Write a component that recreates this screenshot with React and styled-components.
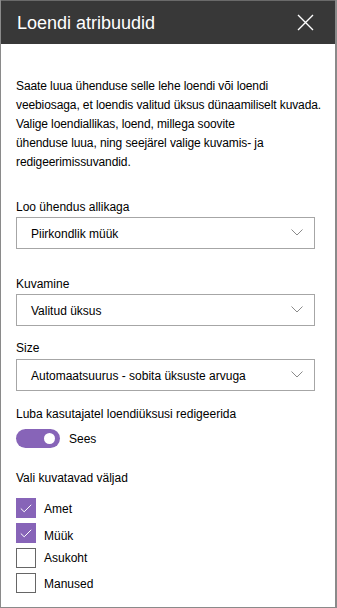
import React, { useState } from 'react';
import styled, { createGlobalStyle } from 'styled-components';

const GlobalStyle = createGlobalStyle`
  html, body {
    margin: 0;
    padding: 0;
    background: #fff;
  }
  body {
    font-family: "Liberation Sans", Arial, sans-serif;
    color: #000;
  }
`;

const Panel = styled.div`
  width: 337px;
  height: 608px;
  box-sizing: border-box;
  border: 1px solid #8a8a8a;
  border-right-width: 2px;
  border-top: none;
  display: flex;
  flex-direction: column;
  background: #fff;
`;

const Header = styled.div`
  height: 44px;
  flex-shrink: 0;
  background: #383838;
  border-top: 1px solid #6a6a6a;
  box-sizing: border-box;
  display: flex;
  align-items: center;
  justify-content: space-between;
  padding: 0 21px 0 16px;
`;

const Title = styled.h1`
  margin: 0;
  font-size: 18px;
  font-weight: 400;
  color: #fff;
  padding-top: 2px;
`;

const CloseButton = styled.button`
  background: none;
  border: none;
  padding: 0;
  width: 17px;
  height: 17px;
  cursor: pointer;
  display: flex;
`;

const Body = styled.div`
  padding: 0 20px 0 15px;
  display: flex;
  flex-direction: column;
`;

const Description = styled.p`
  margin: 33px 0 0;
  font-size: 12px;
  line-height: 19px;
  white-space: nowrap;
  letter-spacing: -0.1px;
`;

const Section = styled.div`
  margin-top: ${p => p.$top}px;
  display: flex;
  flex-direction: column;
`;

const Label = styled.div`
  font-size: 12px;
  line-height: 16px;
  margin-bottom: ${p => p.$gap ?? 2}px;
`;

const Dropdown = styled.div`
  height: 32px;
  box-sizing: border-box;
  border: 1px solid #a6a6a6;
  display: flex;
  align-items: center;
  justify-content: space-between;
  padding: 2px 11px 0 14px;
  font-size: 12px;
  cursor: pointer;
`;

const ToggleRow = styled.div`
  display: flex;
  align-items: center;
  gap: 9px;
  font-size: 12px;
`;

const Track = styled.button`
  width: 44px;
  height: 19px;
  border-radius: 10px;
  border: none;
  padding: 0 5px;
  background: ${p => (p.$on ? '#8764b8' : '#a6a6a6')};
  display: flex;
  align-items: center;
  justify-content: ${p => (p.$on ? 'flex-end' : 'flex-start')};
  cursor: pointer;
`;

const Knob = styled.span`
  width: 11px;
  height: 11px;
  border-radius: 50%;
  background: #fff;
`;

const CheckList = styled.div`
  display: flex;
  flex-direction: column;
  gap: 5px;
`;

const CheckRow = styled.label`
  display: flex;
  align-items: center;
  gap: 8px;
  font-size: 12px;
  cursor: pointer;
`;

const Box = styled.span`
  width: 20px;
  height: 20px;
  box-sizing: border-box;
  border: 1px solid ${p => (p.$checked ? '#8764b8' : '#666')};
  background: ${p => (p.$checked ? '#8764b8' : '#fff')};
  display: flex;
  align-items: center;
  justify-content: center;
`;

const CheckText = styled.span`
  padding-top: ${p => p.$drop}px;
`;

const Chevron = () => (
  <svg width="12" height="7" viewBox="0 0 12 7" style={{ marginTop: -3 }}>
    <path d="M0.5 0.5 L6 6 L11.5 0.5" fill="none" stroke="#8a8a8a" strokeWidth="1" />
  </svg>
);

const fields = [
  { name: 'Amet', checked: true, drop: 2 },
  { name: 'Müük', checked: true, drop: 6 },
  { name: 'Asukoht', checked: false, drop: 0 },
  { name: 'Manused', checked: false, drop: 2 },
];

export default function App() {
  const [editable, setEditable] = useState(true);
  const [checked, setChecked] = useState(fields.map(f => f.checked));

  return (
    <>
      <GlobalStyle />
      <Panel>
        <Header>
          <Title>Loendi atribuudid</Title>
          <CloseButton aria-label="Sulge">
            <svg width="17" height="17" viewBox="0 0 17 17">
              <path d="M1 1 L16 16 M16 1 L1 16" stroke="#fff" strokeWidth="1.4" />
            </svg>
          </CloseButton>
        </Header>
        <Body>
          <Description>
            Saate luua ühenduse selle lehe loendi või loendi<br />
            veebiosaga, et loendis valitud üksus dünaamiliselt kuvada.<br />
            Valige loendiallikas, loend, millega soovite<br />
            ühenduse luua, ning seejärel valige kuvamis- ja<br />
            redigeerimissuvandid.
          </Description>

          <Section $top={27}>
            <Label>Loo ühendus allikaga</Label>
            <Dropdown>
              <span>Piirkondlik müük</span>
              <Chevron />
            </Dropdown>
          </Section>

          <Section $top={27}>
            <Label>Kuvamine</Label>
            <Dropdown>
              <span>Valitud üksus</span>
              <Chevron />
            </Dropdown>
          </Section>

          <Section $top={14}>
            <Label $gap={3}>Size</Label>
            <Dropdown>
              <span>Automaatsuurus - sobita üksuste arvuga</span>
              <Chevron />
            </Dropdown>
          </Section>

          <Section $top={15}>
            <Label $gap={7}>Luba kasutajatel loendiüksusi redigeerida</Label>
            <ToggleRow>
              <Track $on={editable} onClick={() => setEditable(v => !v)}>
                <Knob />
              </Track>
              <span>{editable ? 'Sees' : 'Väljas'}</span>
            </ToggleRow>
          </Section>

          <Section $top={22}>
            <Label $gap={12}>Vali kuvatavad väljad</Label>
            <CheckList>
              {fields.map((f, i) => (
                <CheckRow
                  key={f.name}
                  onClick={() => setChecked(c => c.map((v, j) => (j === i ? !v : v)))}
                >
                  <Box $checked={checked[i]}>
                    {checked[i] && (
                      <svg width="12" height="9" viewBox="0 0 12 9">
                        <path d="M0.8 4.5 L4.2 7.8 L11.2 0.8" fill="none" stroke="#fff" strokeWidth="1" />
                      </svg>
                    )}
                  </Box>
                  <CheckText $drop={f.drop}>{f.name}</CheckText>
                </CheckRow>
              ))}
            </CheckList>
          </Section>
        </Body>
      </Panel>
    </>
  );
}
